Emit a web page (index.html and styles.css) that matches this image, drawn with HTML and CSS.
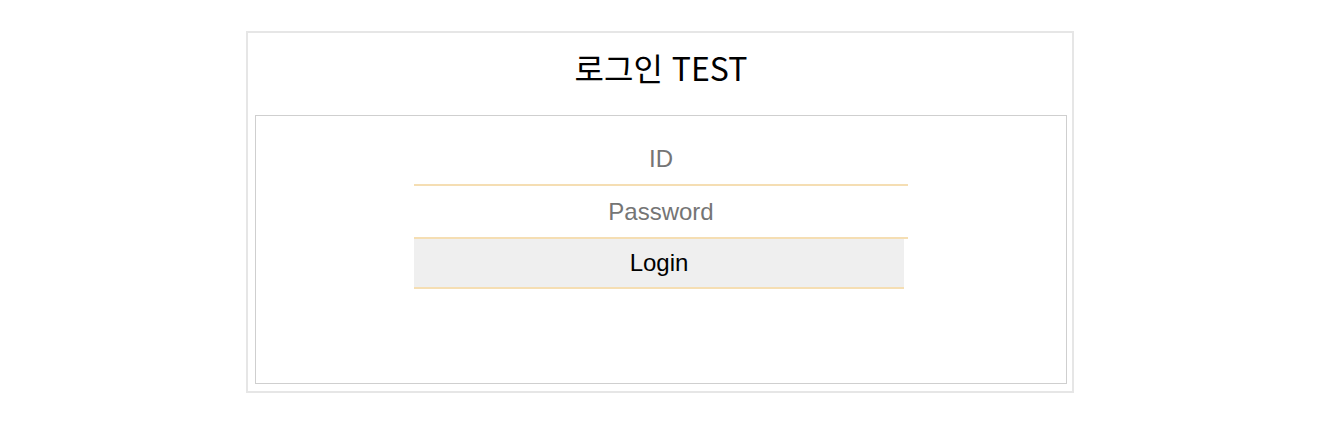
FILE: index.html
```html
<!DOCTYPE html>
<html lang="ko">
<head>
<meta charset="utf-8">
<title>로그인 TEST</title>
<link rel="stylesheet" href="styles.css">
</head>
<body>
<div class="frame">
  <header class="head">
    <h1 class="title">로그인 TEST</h1>
  </header>
  <div class="panel">
    <form class="login-form">
      <input class="field" type="text" placeholder="ID">
      <input class="field" type="password" placeholder="Password">
      <button class="btn" type="button">Login</button>
    </form>
  </div>
</div>
</body>
</html>
```

FILE: styles.css
```css
html, body {
  margin: 0;
  padding: 0;
  background: #fff;
}
body {
  padding-top: 31px;
  font-family: "Liberation Sans", Arial, sans-serif;
}
.frame {
  width: 828px;
  box-sizing: border-box;
  margin: 0 auto;
  border: 2px solid #e6e6e6;
  padding: 0 5px 7px 7px;
  display: flex;
  flex-direction: column;
}
.head {
  padding: 12px 0 26px;
  display: flex;
  justify-content: center;
}
.title {
  margin: 0;
  font-family: "Noto Sans CJK KR", "Noto Sans", sans-serif;
  font-weight: 400;
  font-size: 32px;
  line-height: 44px;
  color: #000;
}
.panel {
  border: 1px solid #cfcfcf;
  height: 269px;
  box-sizing: border-box;
  padding-top: 17px;
  display: flex;
  justify-content: center;
}
.login-form {
  width: 494px;
  display: flex;
  flex-direction: column;
  align-items: flex-start;
}
.field {
  width: 494px;
  height: 53px;
  box-sizing: border-box;
  border: none;
  border-bottom: 2px solid #f5deb3;
  outline: none;
  padding: 0;
  margin: 0;
  text-align: center;
  font-family: "Liberation Sans", Arial, sans-serif;
  font-size: 24px;
  color: #000;
  background: #fff;
}
.field::placeholder {
  color: #757575;
}
.btn {
  width: 490px;
  height: 50px;
  box-sizing: border-box;
  border: none;
  border-bottom: 2px solid #f5deb3;
  background: #efefef;
  margin: 0;
  padding: 0;
  font-family: "Liberation Sans", Arial, sans-serif;
  font-size: 24px;
  color: #000;
}
```
